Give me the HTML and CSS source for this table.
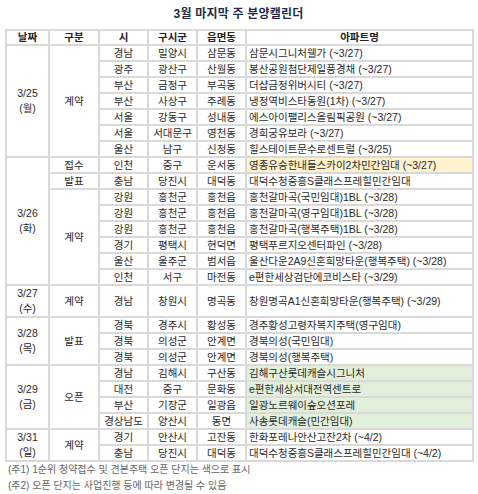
FILE: index.html
```html
<!DOCTYPE html>
<html lang="ko">
<head>
<meta charset="utf-8">
<link rel="stylesheet" href="styles.css">
</head>
<body>
<div class="page">
  <h1 class="title">3월 마지막 주 분양캘린더</h1>
  <table class="cal">
    <colgroup>
      <col class="c-date"><col class="c-type"><col class="c-si"><col class="c-gu"><col class="c-dong"><col class="c-apt">
    </colgroup>
    <thead>
      <tr><th>날짜</th><th>구분</th><th>시</th><th>구시군</th><th>읍면동</th><th>아파트명</th></tr>
    </thead>
    <tbody>
      <tr><td class="date" rowspan="7">3/25<br>(월)</td><td rowspan="7">계약</td><td>경남</td><td>밀양시</td><td>삼문동</td><td class="apt">삼문시그니처웰가 (~3/27)</td></tr>
      <tr><td>광주</td><td>광산구</td><td>산월동</td><td class="apt">봉산공원첨단제일풍경채 (~3/27)</td></tr>
      <tr><td>부산</td><td>금정구</td><td>부곡동</td><td class="apt">더샵금정위버시티 (~3/27)</td></tr>
      <tr><td>부산</td><td>사상구</td><td>주례동</td><td class="apt">냉정역비스타동원(1차) (~3/27)</td></tr>
      <tr><td>서울</td><td>강동구</td><td>성내동</td><td class="apt">에스아이팰리스올림픽공원 (~3/27)</td></tr>
      <tr><td>서울</td><td>서대문구</td><td>영천동</td><td class="apt">경희궁유보라 (~3/27)</td></tr>
      <tr><td>울산</td><td>남구</td><td>신정동</td><td class="apt">힐스테이트문수로센트럴 (~3/25)</td></tr>

      <tr><td class="date" rowspan="8">3/26<br>(화)</td><td>접수</td><td>인천</td><td>중구</td><td>운서동</td><td class="apt hl-yellow">영종유승한내들스카이2차민간임대 (~3/27)</td></tr>
      <tr><td>발표</td><td>충남</td><td>당진시</td><td>대덕동</td><td class="apt">대덕수청중흥S클래스프레힐민간임대</td></tr>
      <tr><td rowspan="6">계약</td><td>강원</td><td>홍천군</td><td>홍천읍</td><td class="apt">홍천갈마곡(국민임대)1BL (~3/28)</td></tr>
      <tr><td>강원</td><td>홍천군</td><td>홍천읍</td><td class="apt">홍천갈마곡(영구임대)1BL (~3/28)</td></tr>
      <tr><td>강원</td><td>홍천군</td><td>홍천읍</td><td class="apt">홍천갈마곡(행복주택)1BL (~3/28)</td></tr>
      <tr><td>경기</td><td>평택시</td><td>현덕면</td><td class="apt">평택푸르지오센터파인 (~3/28)</td></tr>
      <tr><td>울산</td><td>울주군</td><td>범서읍</td><td class="apt">울산다운2A9신혼희망타운(행복주택) (~3/28)</td></tr>
      <tr><td>인천</td><td>서구</td><td>마전동</td><td class="apt">e편한세상검단에코비스타 (~3/29)</td></tr>

      <tr class="tall"><td class="date">3/27<br>(수)</td><td>계약</td><td>경남</td><td>창원시</td><td>명곡동</td><td class="apt">창원명곡A1신혼희망타운(행복주택) (~3/29)</td></tr>

      <tr><td class="date" rowspan="3">3/28<br>(목)</td><td rowspan="3">발표</td><td>경북</td><td>경주시</td><td>황성동</td><td class="apt">경주황성고령자복지주택(영구임대)</td></tr>
      <tr><td>경북</td><td>의성군</td><td>안계면</td><td class="apt">경북의성(국민임대)</td></tr>
      <tr><td>경북</td><td>의성군</td><td>안계면</td><td class="apt">경북의성(행복주택)</td></tr>

      <tr><td class="date" rowspan="4">3/29<br>(금)</td><td rowspan="4">오픈</td><td>경남</td><td>김해시</td><td>구산동</td><td class="apt hl-green">김해구산롯데캐슬시그니처</td></tr>
      <tr><td>대전</td><td>중구</td><td>문화동</td><td class="apt hl-green">e편한세상서대전역센트로</td></tr>
      <tr><td>부산</td><td>기장군</td><td>일광읍</td><td class="apt hl-green">일광노르웨이숲오션포레</td></tr>
      <tr><td>경상남도</td><td>양산시</td><td>동면</td><td class="apt hl-green">사송롯데캐슬(민간임대)</td></tr>

      <tr><td class="date" rowspan="2">3/31<br>(일)</td><td rowspan="2">계약</td><td>경기</td><td>안산시</td><td>고잔동</td><td class="apt">한화포레나안산고잔2차 (~4/2)</td></tr>
      <tr><td>충남</td><td>당진시</td><td>대덕동</td><td class="apt">대덕수청중흥S클래스프레힐민간임대 (~4/2)</td></tr>
    </tbody>
  </table>
  <div class="notes">
    <p>(주1) 1순위 청약접수 및 견본주택 오픈 단지는 색으로 표시</p>
    <p>(주2) 오픈 단지는 사업진행 등에 따라 변경될 수 있음</p>
  </div>
</div>
</body>
</html>
```

FILE: styles.css
```css
html, body {
  margin: 0;
  padding: 0;
  background: #ffffff;
}

body {
  font-family: "Liberation Sans", "Noto Sans CJK KR", sans-serif;
  color: #2a2a2a;
}

.page {
  padding: 0 6px 0 5px;
}

.title {
  margin: 0;
  height: 29px;
  line-height: 29px;
  text-align: center;
  font-size: 12px;
  font-weight: bold;
  color: #1e2c4a;
  letter-spacing: 0.2px;
}

.cal {
  width: 467px;
  table-layout: fixed;
  border-collapse: collapse;
  border: 2px solid #d9d9d9;
  font-size: 10.5px;
}

.c-date { width: 43px; }
.c-type { width: 50px; }
.c-si { width: 49px; }
.c-gu { width: 49px; }
.c-dong { width: 49px; }
.c-apt { width: 227px; }

.cal th,
.cal td {
  border: 2px solid #d9d9d9;
  height: 14px;
  padding: 0;
  line-height: 14px;
  text-align: center;
  vertical-align: middle;
  white-space: nowrap;
  overflow: hidden;
}

.cal th {
  height: 13px;
  line-height: 13px;
  font-weight: bold;
  color: #222;
}

.cal td.date {
  line-height: 15px;
}

.cal tr.tall td {
  height: 30px;
}

.cal tr.tall td.date {
  line-height: 15px;
}

.cal td.apt {
  text-align: left;
  padding-left: 2px;
}

.hl-yellow { background: #fff2cc; }
.hl-green { background: #e2efda; }

.notes {
  padding-left: 3px;
  padding-top: 0;
  font-size: 10px;
  color: #666;
}

.notes p {
  margin: 0;
  line-height: 16px;
}
```
